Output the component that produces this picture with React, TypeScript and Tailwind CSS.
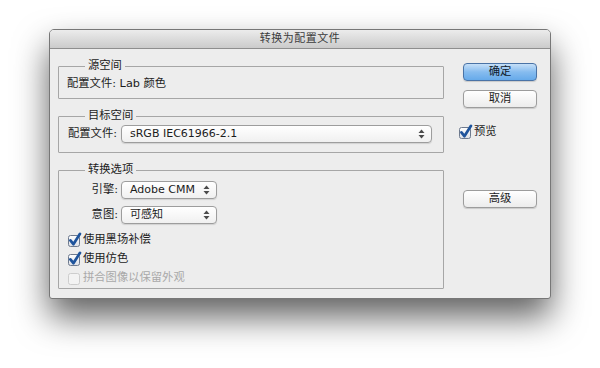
import React from 'react';

const font = { fontFamily: '"DejaVu Sans", "Noto Sans CJK SC", sans-serif' };

const SelectArrows = () => (
  <svg width="7" height="10" viewBox="0 0 7 10" className="shrink-0">
    <path d="M3.5 0.5 L6.5 4 L0.5 4 Z" fill="#4a4a4a" />
    <path d="M3.5 9.5 L6.5 6 L0.5 6 Z" fill="#4a4a4a" />
  </svg>
);

const Select = ({ value, width }: { value: string; width: string }) => (
  <div
    className={`${width} h-[18px] flex items-center justify-between pl-[8px] pr-[6px] rounded-[4px] border border-[#9d9d9d] bg-gradient-to-b from-white to-[#f0f0f0] shadow-[0_1px_1px_rgba(0,0,0,0.12)] text-[11px] text-[#1c1c1c]`}
  >
    <span className="leading-[16px]">{value}</span>
    <SelectArrows />
  </div>
);

const Checkbox = ({ checked, disabled }: { checked?: boolean; disabled?: boolean }) => (
  <svg width="15" height="15" viewBox="0 0 15 15" className="shrink-0 overflow-visible">
    <defs>
      <linearGradient id="cb" x1="0" y1="0" x2="0" y2="1">
        <stop offset="0" stopColor="#ffffff" />
        <stop offset="1" stopColor="#dcdfe6" />
      </linearGradient>
    </defs>
    <rect
      x="1.5"
      y="2.5"
      width="11"
      height="11"
      rx="2"
      fill={disabled ? '#f3f3f3' : 'url(#cb)'}
      stroke={disabled ? '#cdcdcd' : '#6e7a8e'}
    />
    {checked && (
      <path
        d="M3.4 7.4 L6.4 11.2 L13 0.8"
        fill="none"
        stroke="#1f549c"
        strokeWidth="2.7"
        strokeLinecap="round"
        strokeLinejoin="round"
      />
    )}
  </svg>
);

const Group = ({ title, className, children }: { title: string; className?: string; children: React.ReactNode }) => (
  <fieldset className={`border border-[#a6a6a6] rounded-[1px] px-[8px] ${className ?? ''}`}>
    <legend className="ml-[18px] px-[3px] text-[11.3px] leading-[14px] text-[#1c1c1c]">{title}</legend>
    {children}
  </fieldset>
);

const Button = ({ label, primary }: { label: string; primary?: boolean }) => (
  <div
    className={`w-[74px] h-[18px] flex items-center justify-center rounded-[4px] border text-[11.3px] leading-none shadow-[0_1px_1px_rgba(0,0,0,0.15)] ${
      primary
        ? 'border-[#4a73a6] bg-gradient-to-b from-[#c6e0f8] via-[#86bcef] to-[#66aaea] text-[#0f1b2b]'
        : 'border-[#9c9c9c] bg-gradient-to-b from-white to-[#ececec] text-[#1c1c1c]'
    }`}
  >
    {label}
  </div>
);

export default function App() {
  return (
    <div className="w-[600px] h-[368px] bg-white pt-[29px] pl-[49px] overflow-hidden" style={font}>
      <div className="w-[502px] h-[270px] flex flex-col rounded-t-[5px] rounded-b-[3px] border border-[#777777] bg-[#ededed] shadow-[0_18px_34px_rgba(0,0,0,0.62)] overflow-hidden">
        {/* title bar */}
        <div className="h-[19px] shrink-0 flex items-center justify-center border-b border-[#8e8e8e] bg-gradient-to-b from-[#ececec] to-[#cbcbcb] text-[11px] text-[#3c3c3c] tracking-[0.5px]">
          转换为配置文件
        </div>

        <div className="flex pl-[8px]">
          {/* left column */}
          <div className="w-[386px] flex flex-col gap-[10px] pt-[10px]">
            <Group title="源空间" className="h-[40px]">
              <div className="pt-[4px] text-[11.3px] leading-[14px] text-[#1c1c1c]">配置文件: Lab 颜色</div>
            </Group>

            <Group title="目标空间" className="h-[44px]">
              <div className="flex items-center gap-[4px] pt-[2px] text-[11.3px] text-[#1c1c1c]">
                <span className="pl-[1px]">配置文件:</span>
                <Select value="sRGB IEC61966-2.1" width="w-[311px]" />
              </div>
            </Group>

            <Group title="转换选项" className="h-[126px]">
              <div className="flex flex-col pt-[4px] text-[11.3px] text-[#1c1c1c]">
                <div className="flex items-center">
                  <span className="w-[54px] text-right pr-[3px]">引擎:</span>
                  <Select value="Adobe CMM" width="w-[96px]" />
                </div>
                <div className="flex items-center mt-[7px]">
                  <span className="w-[54px] text-right pr-[3px]">意图:</span>
                  <Select value="可感知" width="w-[96px]" />
                </div>
                <div className="flex flex-col gap-[3px] mt-[8px]">
                  <div className="flex items-center gap-[1px] h-[16px]">
                    <Checkbox checked />
                    <span>使用黑场补偿</span>
                  </div>
                  <div className="flex items-center gap-[1px] h-[16px]">
                    <Checkbox checked />
                    <span>使用仿色</span>
                  </div>
                  <div className="flex items-center gap-[1px] h-[16px] text-[#a9a9a9]">
                    <Checkbox disabled />
                    <span>拼合图像以保留外观</span>
                  </div>
                </div>
              </div>
            </Group>
          </div>

          {/* right column */}
          <div className="ml-[19px] w-[74px] flex flex-col pt-[14px]">
            <Button label="确定" primary />
            <div className="mt-[9px]">
              <Button label="取消" />
            </div>
            <div className="mt-[16px] flex items-center gap-[1px] -ml-[5px] text-[11.3px] text-[#1c1c1c]">
              <Checkbox checked />
              <span>预览</span>
            </div>
            <div className="mt-[49px]">
              <Button label="高级" />
            </div>
          </div>
        </div>
      </div>
    </div>
  );
}
